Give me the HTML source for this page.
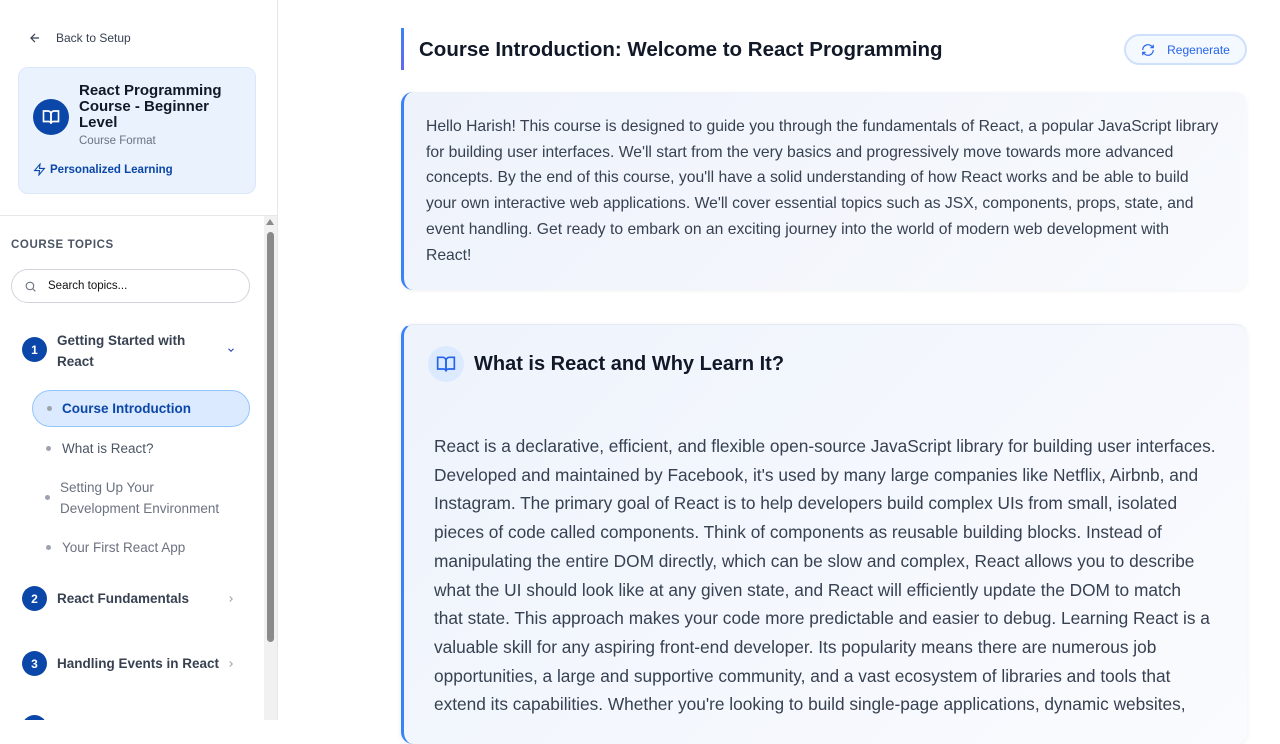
<!DOCTYPE html>
<html><head><meta charset="utf-8"><style>
*{box-sizing:border-box;margin:0;padding:0}
body{width:1280px;height:720px;overflow:hidden;background:#fff;font-family:"Liberation Sans",sans-serif;position:relative;color:#111827}
.side{position:absolute;left:0;top:0;width:278px;height:720px;border-right:1px solid #e5e7eb;background:#fff;overflow:hidden}
.back{position:absolute;left:28px;top:31px;font-size:12px;color:#374151;display:flex;align-items:center;gap:14px}
.card{position:absolute;left:18px;top:67px;width:238px;height:127px;background:#eaf2fe;border:1px solid #dbe7fb;border-radius:10px}
.circ{position:absolute;left:14px;top:31px;width:36px;height:36px;border-radius:50%;background:#0b47a8;display:flex;align-items:center;justify-content:center}
.ctitle{position:absolute;left:60px;top:15px;font-size:15px;font-weight:bold;line-height:16px;color:#111827;width:170px}
.cfmt{position:absolute;left:60px;top:67px;font-size:11.5px;color:#6b7280}
.pl{position:absolute;left:14px;top:95px;font-size:11.5px;color:#0b47a8;font-weight:bold;display:flex;align-items:center;gap:4px}
.hr{position:absolute;left:0;top:215px;width:277px;border-top:1px solid #e5e7eb}
.sb{position:absolute;left:267px;top:232px;width:7px;height:410px;background:#8a8a8a;border-radius:4px}
.sbt{position:absolute;left:266px;top:219px;width:0;height:0;border-left:4px solid transparent;border-right:4px solid transparent;border-bottom:6px solid #8a8a8a}
.sbg{position:absolute;left:264px;top:216px;width:13px;height:504px;background:#f1f1f1}
.ct{position:absolute;left:11px;top:239px;font-size:11.5px;letter-spacing:.6px;color:#4b5563;font-weight:bold}
.search{position:absolute;left:11px;top:269px;width:239px;height:34px;border:1px solid #d1d5db;border-radius:17px;font-size:11.5px;color:#111;display:flex;align-items:center;padding-left:12px;gap:11px}
.num{position:absolute;left:22px;width:25px;height:25px;border-radius:50%;background:#0b47a8;color:#fff;font-size:12px;font-weight:bold;display:flex;align-items:center;justify-content:center}
.tt{position:absolute;left:57px;font-size:13.5px;font-weight:bold;color:#374151;line-height:21px}
.sub{position:absolute;left:47px;font-size:13.5px;color:#4b5563;line-height:21px}
.dot{position:absolute;width:5px;height:5px;border-radius:50%;background:#9ca3af}
.act{position:absolute;left:32px;top:390px;width:218px;height:37px;border:1px solid #93c5fd;background:#dbeafe;border-radius:19px}
.bar{position:absolute;left:401px;top:28px;width:3px;height:42px;background:linear-gradient(#3b82f6,#6366f1)}
h1{position:absolute;left:419px;top:38px;font-size:20.5px;font-weight:bold;color:#111827}
.regen{position:absolute;left:1124px;top:34px;width:123px;height:31px;border:2px solid #cfe0fb;border-radius:16px;background:#f4f8ff;color:#2563eb;font-size:12px;display:flex;align-items:center;justify-content:center;gap:12px}
.c1{position:absolute;left:401px;top:92px;width:846px;height:198px;border-left:3px solid #3b82f6;border-radius:12px;background:linear-gradient(135deg,#eef2fb,#f8fafd);box-shadow:0 1px 4px rgba(0,0,0,.06);padding:22px 0 0 22px;font-size:15.7px;line-height:25.7px;color:#374151;white-space:nowrap}
.c2{position:absolute;left:401px;top:324px;width:846px;height:420px;border-left:3px solid #3b82f6;border-top:1px solid #e3e9f5;border-radius:12px;background:linear-gradient(135deg,#eef3fc,#fafbfe);box-shadow:0 1px 6px rgba(0,0,0,.07)}
.ic{position:absolute;left:24px;top:21px;width:36px;height:36px;border-radius:50%;background:#dbeafe;display:flex;align-items:center;justify-content:center}
.h2{position:absolute;left:70px;top:28px;font-size:20px;font-weight:bold;color:#111827}
.body2{position:absolute;left:30px;top:107px;font-size:17.3px;line-height:28.7px;color:#374151;white-space:nowrap}
</style></head><body>
<div class="side">
<div class="back"><svg width="14" height="14" viewBox="0 0 24 24" fill="none" stroke="#374151" stroke-width="2"><path d="M19 12H5M12 19l-7-7 7-7"/></svg>Back to Setup</div>
<div class="card">
<div class="circ"><svg width="18" height="18" viewBox="0 0 24 24" fill="none" stroke="#fff" stroke-width="2.2"><path d="M2 4h6a4 4 0 0 1 4 4v13a3 3 0 0 0-3-3H2z"/><path d="M22 4h-6a4 4 0 0 0-4 4v13a3 3 0 0 1 3-3h7z"/></svg></div>
<div class="ctitle">React Programming Course - Beginner Level</div>
<div class="cfmt">Course Format</div>
<div class="pl"><svg width="13" height="13" viewBox="0 0 24 24" fill="none" stroke="#0b47a8" stroke-width="2"><path d="M13 2L3 14h9l-1 8 10-12h-9z"/></svg>Personalized Learning</div>
</div>
<div class="hr"></div>
<div class="sbg"></div><div class="sbt"></div><div class="sb"></div>
<div class="ct">COURSE TOPICS</div>
<div class="search"><svg width="13" height="13" viewBox="0 0 24 24" fill="none" stroke="#6b7280" stroke-width="2"><circle cx="11" cy="11" r="7"/><path d="M21 21l-5-5"/></svg>Search topics...</div>
<div class="num" style="top:337px">1</div>
<div class="tt" style="top:330px">Getting Started with<br>React</div>
<svg style="position:absolute;left:225px;top:345px" width="12" height="10" viewBox="0 0 24 24" fill="none" stroke="#1e40af" stroke-width="2.5"><path d="M6 9l6 6 6-6"/></svg>
<div class="act"></div>
<div class="dot" style="left:47px;top:406px"></div><div class="sub" style="left:62px;top:398px;color:#0b47a8;font-weight:bold">Course Introduction</div>
<div class="dot" style="left:46px;top:446px"></div><div class="sub" style="left:62px;top:438px">What is React?</div>
<div class="dot" style="left:45px;top:495px"></div><div class="sub" style="left:60px;top:477px;color:#6b7280">Setting Up Your<br>Development Environment</div>
<div class="dot" style="left:46px;top:545px"></div><div class="sub" style="left:62px;top:537px;color:#6b7280">Your First React App</div>
<div class="num" style="top:586px">2</div><div class="tt" style="top:588px">React Fundamentals</div>
<svg style="position:absolute;left:226px;top:593px" width="10" height="12" viewBox="0 0 24 24" fill="none" stroke="#9ca3af" stroke-width="2.5"><path d="M9 6l6 6-6 6"/></svg>
<div class="num" style="top:651px">3</div><div class="tt" style="top:653px">Handling Events in React</div>
<svg style="position:absolute;left:226px;top:658px" width="10" height="12" viewBox="0 0 24 24" fill="none" stroke="#9ca3af" stroke-width="2.5"><path d="M9 6l6 6-6 6"/></svg>
<div class="num" style="top:715px">4</div>
</div>
<div class="bar"></div>
<h1>Course Introduction: Welcome to React Programming</h1>
<div class="regen"><svg width="14" height="14" viewBox="0 0 24 24" fill="none" stroke="#2563eb" stroke-width="2"><path d="M21 12a9 9 0 0 1-15 6.7L3 16M3 12a9 9 0 0 1 15-6.7L21 8M21 3v5h-5M3 21v-5h5"/></svg>Regenerate</div>
<div class="c1">Hello Harish! This course is designed to guide you through the fundamentals of React, a popular JavaScript library<br>for building user interfaces. We'll start from the very basics and progressively move towards more advanced<br>concepts. By the end of this course, you'll have a solid understanding of how React works and be able to build<br>your own interactive web applications. We'll cover essential topics such as JSX, components, props, state, and<br>event handling. Get ready to embark on an exciting journey into the world of modern web development with<br>React!</div>
<div class="c2">
<div class="ic"><svg width="20" height="20" viewBox="0 0 24 24" fill="none" stroke="#2563eb" stroke-width="2"><path d="M2 4h6a4 4 0 0 1 4 4v13a3 3 0 0 0-3-3H2z"/><path d="M22 4h-6a4 4 0 0 0-4 4v13a3 3 0 0 1 3-3h7z"/></svg></div>
<div class="h2">What is React and Why Learn It?</div>
<div class="body2">React is a declarative, efficient, and flexible open-source JavaScript library for building user interfaces.<br>Developed and maintained by Facebook, it's used by many large companies like Netflix, Airbnb, and<br>Instagram. The primary goal of React is to help developers build complex UIs from small, isolated<br>pieces of code called components. Think of components as reusable building blocks. Instead of<br>manipulating the entire DOM directly, which can be slow and complex, React allows you to describe<br>what the UI should look like at any given state, and React will efficiently update the DOM to match<br>that state. This approach makes your code more predictable and easier to debug. Learning React is a<br>valuable skill for any aspiring front-end developer. Its popularity means there are numerous job<br>opportunities, a large and supportive community, and a vast ecosystem of libraries and tools that<br>extend its capabilities. Whether you're looking to build single-page applications, dynamic websites,</div>
</div>
</body></html>
